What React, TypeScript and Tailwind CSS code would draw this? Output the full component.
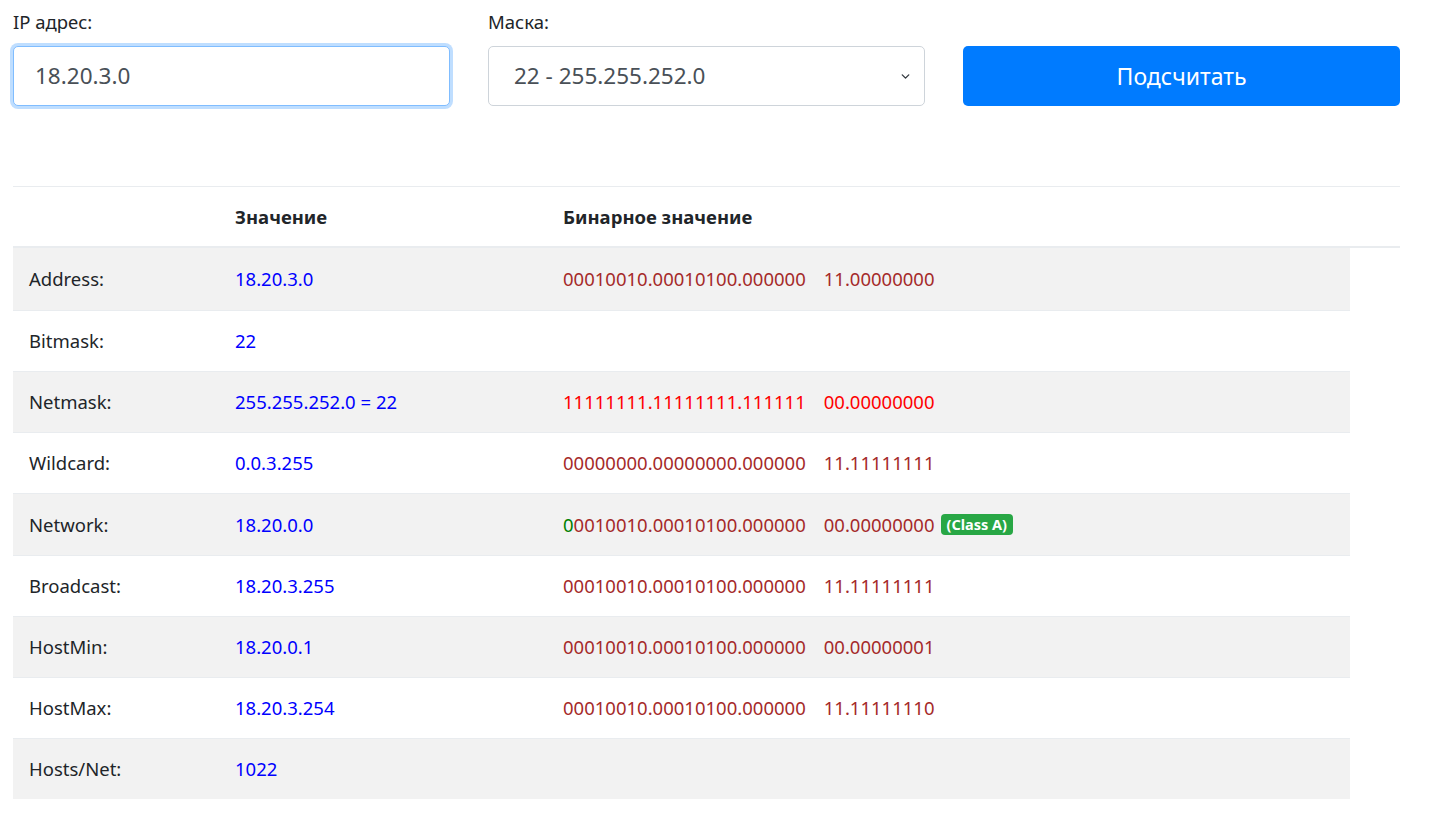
import { ChevronDown } from "lucide-react";

type Row = {
  label: string;
  value: React.ReactNode;
  binary?: React.ReactNode;
};

const font = { fontFamily: '"Noto Sans", "Segoe UI", sans-serif' };

function Bin({ a, b, color = "text-[#a52a2a]" }: { a: React.ReactNode; b: string; color?: string }) {
  return (
    <span className={color}>
      <span>{a}</span>
      <span className="ml-[18px]">{b}</span>
    </span>
  );
}

const rows: Row[] = [
  { label: "Address:", value: "18.20.3.0", binary: <Bin a="00010010.00010100.000000" b="11.00000000" /> },
  { label: "Bitmask:", value: "22" },
  {
    label: "Netmask:",
    value: "255.255.252.0 = 22",
    binary: <Bin a="11111111.11111111.111111" b="00.00000000" color="text-[#ff0000]" />,
  },
  { label: "Wildcard:", value: "0.0.3.255", binary: <Bin a="00000000.00000000.000000" b="11.11111111" /> },
  {
    label: "Network:",
    value: "18.20.0.0",
    binary: (
      <span className="flex items-center">
        <Bin
          a={
            <>
              <span className="text-[#008000]">0</span>0010010.00010100.000000
            </>
          }
          b="00.00000000"
        />
        <span className="ml-[6px] rounded-[4px] bg-[#28a745] px-[6px] py-[2px] text-[14.5px] font-bold leading-[17px] text-white">
          (Class A)
        </span>
      </span>
    ),
  },
  { label: "Broadcast:", value: "18.20.3.255", binary: <Bin a="00010010.00010100.000000" b="11.11111111" /> },
  { label: "HostMin:", value: "18.20.0.1", binary: <Bin a="00010010.00010100.000000" b="00.00000001" /> },
  { label: "HostMax:", value: "18.20.3.254", binary: <Bin a="00010010.00010100.000000" b="11.11111110" /> },
  { label: "Hosts/Net:", value: "1022" },
];

export default function App() {
  return (
    <div className="min-h-screen bg-white text-[18.5px] text-[#212529]" style={font}>
      <div className="w-[1387px] ml-[13px] pt-[10px]">
        <div className="grid grid-cols-3 gap-[38px]">
          <div>
            <div className="mb-[12px] h-6 leading-6">IP адрес:</div>
            <div className="flex h-[60px] items-center rounded-[5px] border border-[#80bdff] bg-white pl-[21px] text-[22.5px] text-[#495057] shadow-[0_0_0_3px_rgba(0,123,255,0.25)]">
              18.20.3.0
            </div>
          </div>
          <div>
            <div className="mb-[12px] h-6 leading-6">Маска:</div>
            <div className="flex h-[60px] items-center justify-between rounded-[5px] border border-[#ced4da] bg-white pl-[25px] pr-[12px] text-[22.5px] text-[#495057]">
              <span>22 - 255.255.252.0</span>
              <ChevronDown className="h-[13px] w-[13px] text-[#343a40]" strokeWidth={2.5} />
            </div>
          </div>
          <div className="pt-[36px]">
            <div className="flex h-[60px] items-center justify-center rounded-[5px] bg-[#007bff] text-[23px] text-white">
              Подсчитать
            </div>
          </div>
        </div>

        <div className="mt-[80px]">
          <div className="flex h-[62px] items-center border-t border-b-2 border-[#e9ecef] font-bold">
            <div className="w-[206px] px-4" />
            <div className="w-[328px] px-4">Значение</div>
            <div className="px-4">Бинарное значение</div>
          </div>
          <div className="w-[1337px]">
            {rows.map((r, i) => (
              <div
                key={r.label}
                className={`flex items-center border-t border-[#e9ecef] first:border-t-0 ${
                  i % 2 === 0 ? "bg-[#f2f2f2]" : "bg-white"
                } ${i === 0 || i === 4 ? "h-[62px]" : "h-[61px]"}`}
              >
                <div className="w-[206px] px-4">{r.label}</div>
                <div className="w-[328px] px-4 text-[#0000ff]">{r.value}</div>
                <div className="px-4">{r.binary}</div>
              </div>
            ))}
          </div>
        </div>
      </div>
    </div>
  );
}
